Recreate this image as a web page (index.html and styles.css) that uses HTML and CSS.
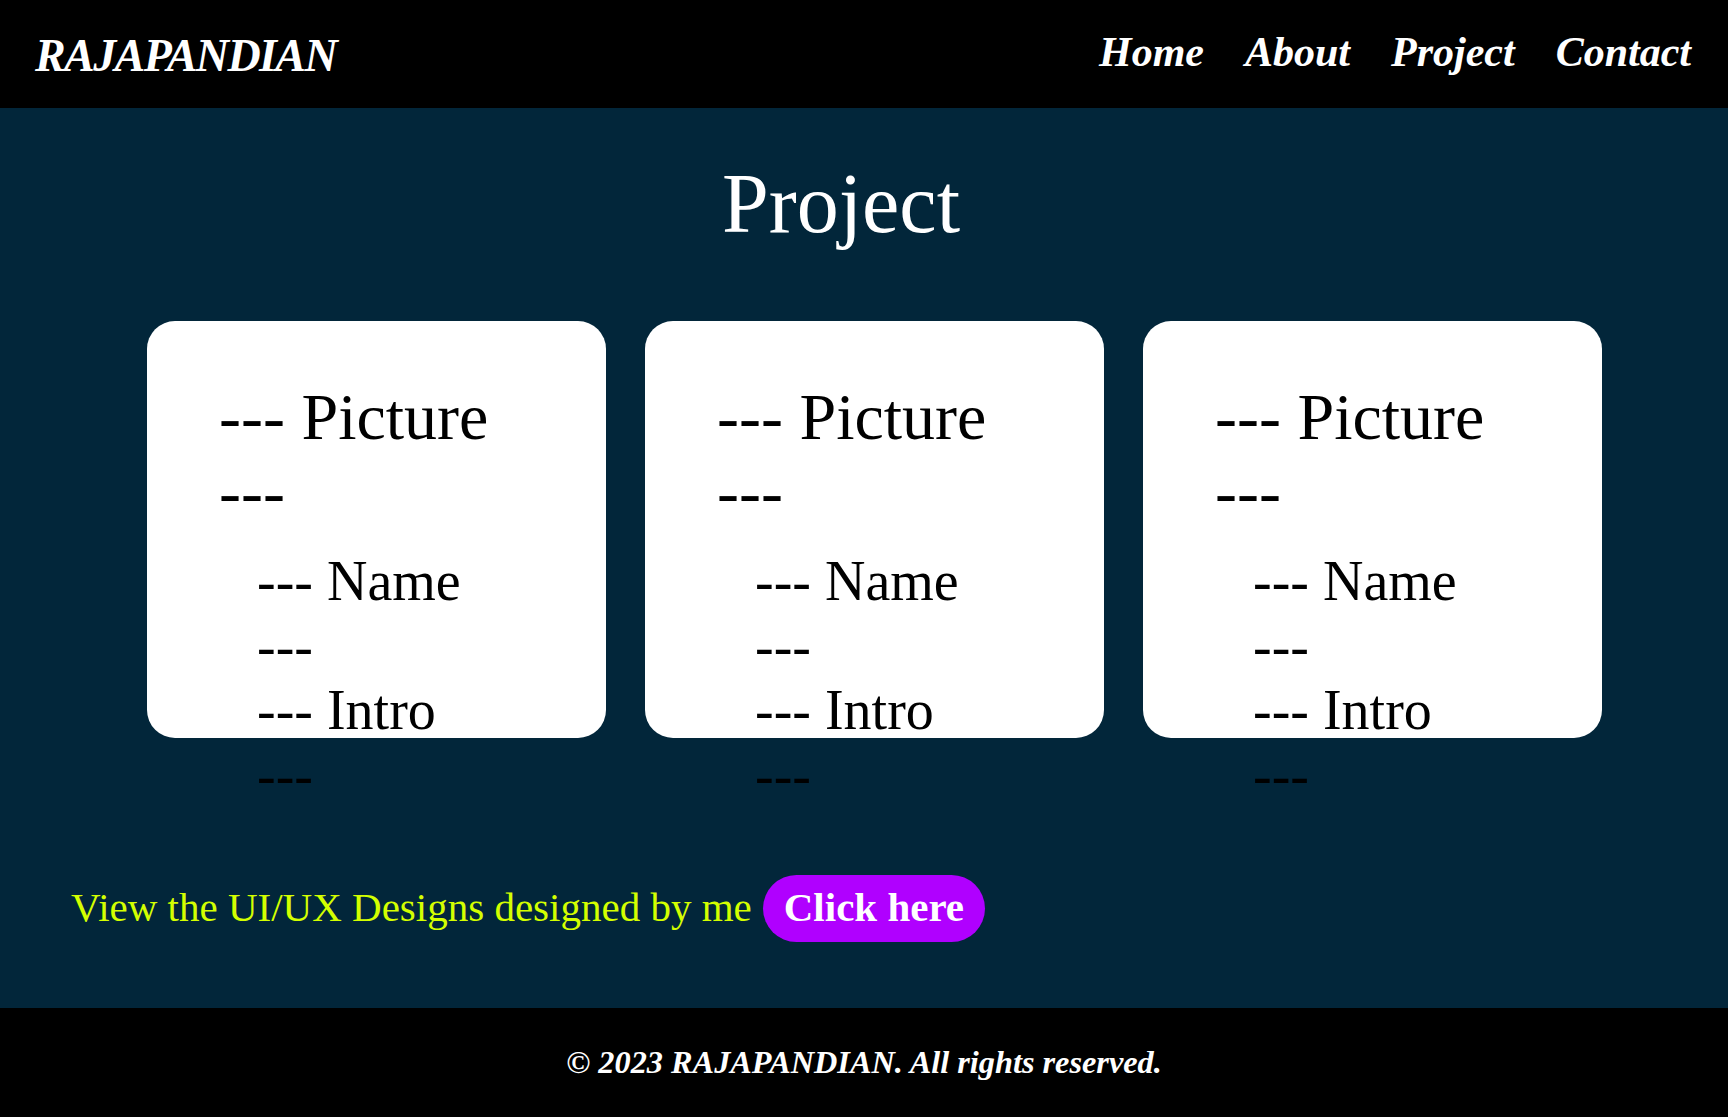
FILE: index.html
```html
<!DOCTYPE html>
<html lang="en">
<head>
<meta charset="utf-8">
<title>Project - Rajapandian</title>
<link rel="stylesheet" href="styles.css">
</head>
<body>
<header class="topbar">
  <div class="logo">RAJAPANDIAN</div>
  <nav class="nav">
    <a href="#">Home</a>
    <a href="#">About</a>
    <a href="#">Project</a>
    <a href="#">Contact</a>
  </nav>
</header>
<main class="main">
  <h1 class="title">Project</h1>
  <section class="cards">
    <div class="card">
      <div class="pic"><span class="dash">---</span> Picture <span class="dash">---</span></div>
      <div class="info">
        <div><span class="dash">---</span> Name <span class="dash">---</span></div>
        <div><span class="dash">---</span> Intro <span class="dash">---</span></div>
      </div>
    </div>
    <div class="card">
      <div class="pic"><span class="dash">---</span> Picture <span class="dash">---</span></div>
      <div class="info">
        <div><span class="dash">---</span> Name <span class="dash">---</span></div>
        <div><span class="dash">---</span> Intro <span class="dash">---</span></div>
      </div>
    </div>
    <div class="card">
      <div class="pic"><span class="dash">---</span> Picture <span class="dash">---</span></div>
      <div class="info">
        <div><span class="dash">---</span> Name <span class="dash">---</span></div>
        <div><span class="dash">---</span> Intro <span class="dash">---</span></div>
      </div>
    </div>
  </section>
  <div class="cta">
    <span class="cta-text">View the UI/UX Designs designed by me</span>
    <a class="cta-btn" href="#">Click here</a>
  </div>
</main>
<footer class="footer">© 2023 RAJAPANDIAN. All rights reserved.</footer>
</body>
</html>
```
FILE: styles.css
```css
* { box-sizing: border-box; }
body {
  margin: 0;
  font-family: "Liberation Serif", "Times New Roman", serif;
  background: #02263a;
}
.topbar {
  height: 108px;
  background: #000;
  display: flex;
  align-items: center;
  justify-content: space-between;
  padding: 0 37px 0 35px;
}
.logo {
  color: #fff;
  font-size: 46px;
  font-weight: bold;
  font-style: italic;
  letter-spacing: -1.6px;
  line-height: 1;
  margin-top: 4px;
}
.nav {
  display: flex;
  gap: 41px;
  margin-top: -5px;
}
.nav a {
  color: #fff;
  text-decoration: none;
  font-size: 42px;
  font-weight: bold;
  font-style: italic;
  line-height: 1;
}
.main {
  background: #02263a;
  padding: 54px 0 66px;
}
.title {
  margin: 0 46px 0 0;
  text-align: center;
  color: #fff;
  font-size: 84px;
  font-weight: normal;
  line-height: 84px;
}
.cards {
  display: flex;
  gap: 39px;
  padding-left: 147px;
  margin-top: 75px;
}
.card {
  width: 459px;
  height: 417px;
  background: #fff;
  border-radius: 28px;
  padding: 58px 0 0 72px;
  color: #000;
}
.dash { white-space: nowrap; }
.pic {
  width: 310px;
  font-size: 66px;
  line-height: 75px;
}
.info {
  width: 230px;
  margin: 20px 0 0 38px;
  font-size: 56px;
  line-height: 64.5px;
}
.cta {
  display: flex;
  align-items: baseline;
  gap: 11px;
  padding-left: 71px;
  margin-top: 137px;
}
.cta-text {
  color: #d4ff00;
  font-size: 41px;
}
.cta-btn {
  display: inline-block;
  background: #b000ff;
  color: #fff;
  text-decoration: none;
  font-size: 41px;
  font-weight: bold;
  line-height: 47px;
  padding: 9px 21px 11px;
  border-radius: 34px;
}
.footer {
  height: 109px;
  background: #000;
  color: #fff;
  display: flex;
  align-items: center;
  justify-content: center;
  font-size: 32.3px;
  font-weight: bold;
  font-style: italic;
}
```
